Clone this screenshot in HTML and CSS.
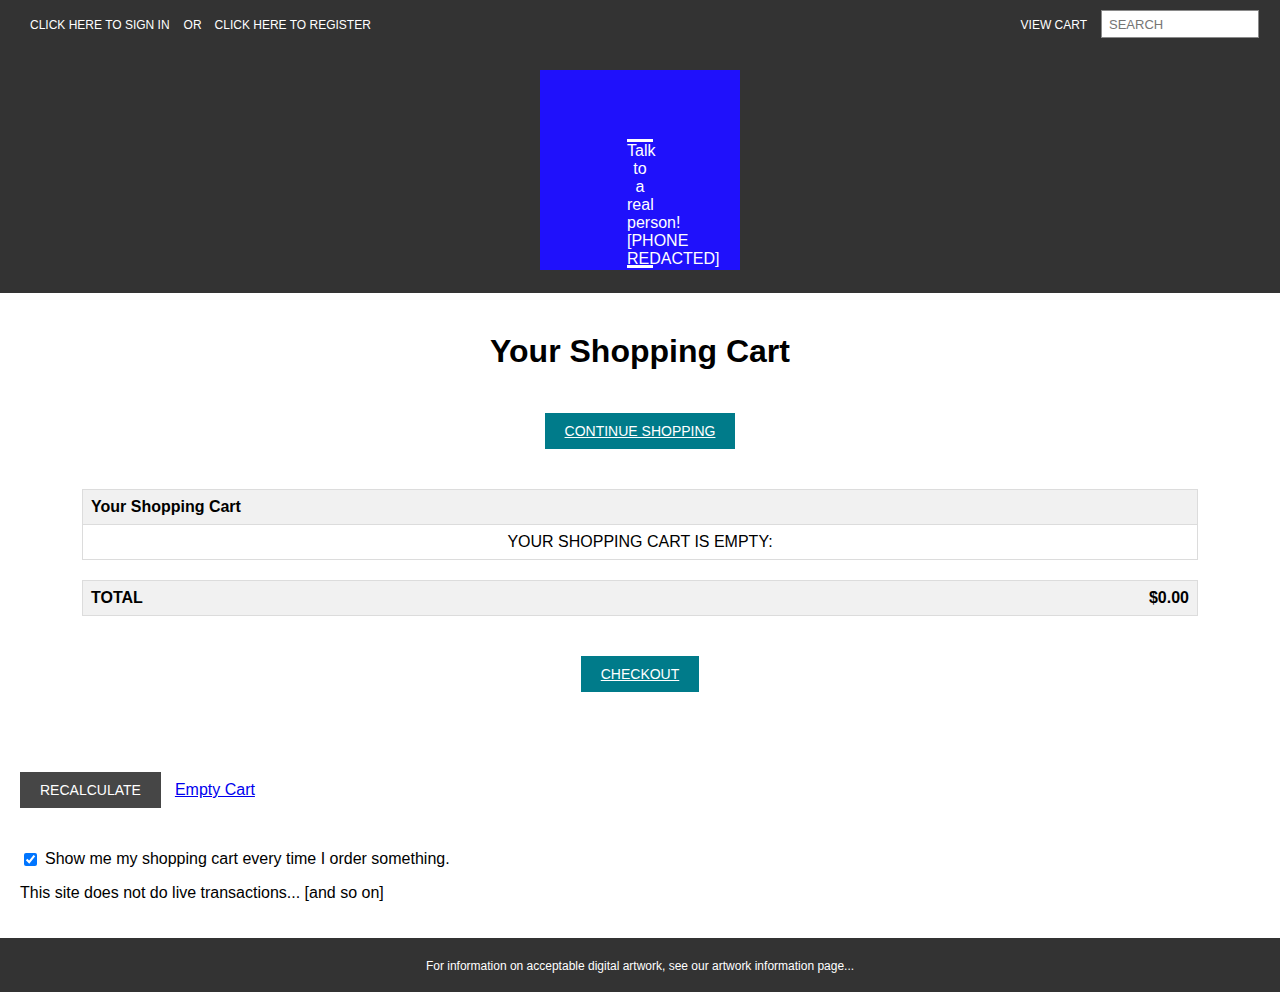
FILE: index.html
```html
<!DOCTYPE html>
<html lang="en">
<head>
<meta charset="utf-8">
<title>Your Shopping Cart</title>
<link rel="stylesheet" href="styles.css">
</head>
<body>
<header class="site-header">
  <div class="topbar">
    <div class="account-links">
      <a href="#" class="top-link">CLICK HERE TO SIGN IN</a>
      <span class="top-or">OR</span>
      <a href="#" class="top-link">CLICK HERE TO REGISTER</a>
    </div>
    <div class="top-right">
      <a href="#" class="top-link">VIEW CART</a>
      <input class="search" type="text" placeholder="SEARCH">
    </div>
  </div>
  <div class="banner">
    <div class="promo">
      <div class="promo-text">Talk to a real person! [PHONE REDACTED]</div>
    </div>
  </div>
</header>

<main class="content">
  <h1 class="page-title">Your Shopping Cart</h1>
  <div class="btn-row first">
    <a href="#" class="btn btn-teal">CONTINUE SHOPPING</a>
  </div>

  <table class="cart-table">
    <thead>
      <tr><th>Your Shopping Cart</th></tr>
    </thead>
    <tbody>
      <tr><td class="empty">YOUR SHOPPING CART IS EMPTY:</td></tr>
    </tbody>
  </table>

  <table class="cart-table total-table">
    <tr class="total-row"><th class="total-label">TOTAL</th><th class="total-value">$0.00</th></tr>
  </table>

  <div class="btn-row checkout-row">
    <a href="#" class="btn btn-teal">CHECKOUT</a>
  </div>

  <div class="actions">
    <button class="btn btn-dark" type="button">RECALCULATE</button>
    <a href="#" class="empty-link">Empty Cart</a>
  </div>

  <label class="show-cart"><input type="checkbox" checked> Show me my shopping cart every time I order something.</label>
  <p class="note">This site does not do live transactions... [and so on]</p>
</main>

<footer class="site-footer">
  For information on acceptable digital artwork, see our artwork information page...
</footer>
</body>
</html>
```

FILE: styles.css
```css
html, body {
  margin: 0;
  padding: 0;
}
body {
  font-family: "Liberation Sans", Arial, sans-serif;
  font-size: 16px;
  color: #000;
  background: #fff;
}

.site-header {
  background: #333333;
  padding-bottom: 23px;
}
.topbar {
  height: 48px;
  display: flex;
  align-items: center;
  justify-content: space-between;
  padding: 0 21px 0 30px;
}
.account-links, .top-right {
  display: flex;
  align-items: center;
}
.top-link, .top-or {
  color: #fff;
  text-decoration: none;
  font-size: 12px;
  padding-top: 1px;
}
.top-or {
  margin: 0 13px 0 14px;
}
.top-right .top-link {
  margin-right: 14px;
}
.search {
  width: 158px;
  height: 28px;
  box-sizing: border-box;
  border: 1px solid #8a8a8a;
  padding: 0 7px;
  font-family: "Liberation Sans", Arial, sans-serif;
  font-size: 13px;
  background: #fff;
}
.search::placeholder {
  color: #757575;
}

.banner {
  display: flex;
  justify-content: center;
  margin-top: 22px;
}
.promo {
  width: 200px;
  height: 200px;
  background: #1f11fb;
  display: flex;
  justify-content: center;
  align-items: flex-end;
  padding-bottom: 2px;
  box-sizing: border-box;
}
.promo-text {
  width: 26px;
  height: 123px;
  border-top: 3px solid #fff;
  border-bottom: 3px solid #fff;
  color: #fff;
  text-align: center;
  font-size: 16px;
  line-height: 18px;
  overflow: visible;
}

.content {
  padding: 0 20px;
}
.page-title {
  text-align: center;
  font-size: 32px;
  line-height: 37px;
  margin: 40px 0 0;
}
.btn-row {
  text-align: center;
}
.btn-row.first {
  margin-top: 43px;
}
.btn {
  display: inline-block;
  height: 36px;
  line-height: 36px;
  padding: 0 20px;
  font-family: "Liberation Sans", Arial, sans-serif;
  font-size: 14px;
  color: #fff;
  border: 0;
}
.btn-teal {
  background: #007b8a;
  text-decoration: underline;
}
.btn-dark {
  background: #464646;
  cursor: pointer;
}

.cart-table {
  width: 90%;
  margin: 40px auto 0;
  border-collapse: collapse;
}
.cart-table th, .cart-table td {
  border: 1px solid #dcdcdc;
  padding: 8px;
  line-height: 18px;
  font-size: 16px;
}
.cart-table th {
  background: #f1f1f1;
  text-align: left;
  font-weight: bold;
}
.cart-table td.empty {
  text-align: center;
}
.total-table {
  margin-top: 20px;
}
.cart-table th.total-label {
  border-right: 0;
}
.cart-table th.total-value {
  text-align: right;
  border-left: 0;
}
.checkout-row {
  margin-top: 40px;
}

.actions {
  display: flex;
  align-items: center;
  gap: 14px;
  margin-top: 80px;
}
.empty-link {
  color: #0000ee;
  text-decoration: underline;
  font-size: 16px;
}

.show-cart {
  display: flex;
  align-items: center;
  margin-top: 42px;
  line-height: 18px;
}
.show-cart input {
  margin: 0 8px 0 4px;
  width: 13px;
  height: 13px;
}
.note {
  margin: 16px 0 0;
  line-height: 18px;
  padding-bottom: 36px;
}

.site-footer {
  background: #333333;
  color: #fff;
  text-align: center;
  font-size: 12px;
  height: 54px;
  box-sizing: border-box;
  padding-top: 2px;
  line-height: 52px;
}
```
